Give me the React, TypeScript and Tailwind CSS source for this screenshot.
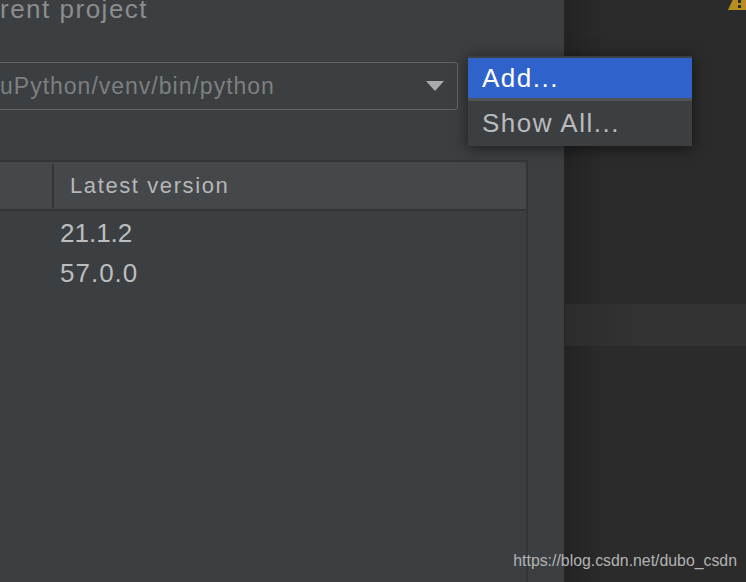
function WarningIcon() {
  return (
    <svg width="18" height="10" viewBox="0 0 18 10" className="absolute right-0 top-0">
      <path d="M6 -3 L18 -3 L18 10 L0 10 Z" fill="#b8901f" />
      <rect x="10" y="0" width="3" height="3" fill="#2b2b2b" />
      <rect x="10" y="5" width="3" height="3" fill="#2b2b2b" />
    </svg>
  )
}

export default function App() {
  return (
    <div className="relative flex h-[582px] w-[746px] overflow-hidden bg-[#2b2b2b] font-['Liberation_Sans',sans-serif] antialiased">
      <div className="flex w-[565px] shrink-0 flex-col border-r border-[#252525] bg-[#3c3f41]">
        <div className="h-[22px] whitespace-nowrap pt-[1px] text-[26px] leading-[16px] tracking-[1.5px] text-[#8b8d8e]">
          rent project
        </div>

        <div className="mt-[40px] flex h-[48px] w-[458px] items-center justify-between rounded-r-[4px] border border-l-0 border-[#646464] pr-[13px]">
          <span className="whitespace-nowrap text-[23px] leading-[26px] tracking-[1px] text-[#7d7f80]">
            uPython/venv/bin/python
          </span>
          <div className="h-0 w-0 border-x-[9px] border-t-[10px] border-x-transparent border-t-[#a9abad]" />
        </div>

        <div className="mt-[50px] flex h-[424px] w-[528px] flex-col border-r-[2px] border-t-[2px] border-[#333536]">
          <div className="flex h-[49px] items-center border-b-[2px] border-[#333536] bg-[#45484a] pt-[2px]">
            <div className="h-[44px] w-[54px] border-r-[2px] border-[#333536]" />
            <span className="ml-[16px] whitespace-nowrap text-[22px] leading-[26px] tracking-[1.6px] text-[#b5b7b8]">
              Latest version
            </span>
          </div>
          <div className="flex flex-col gap-[13px] pl-[60px] pt-[9px] text-[26px] leading-[27px] text-[#bbbdbe]">
            <span>21.1.2</span>
            <span className="tracking-[1px]">57.0.0</span>
          </div>
        </div>
      </div>

      <div className="flex flex-1 flex-col bg-[linear-gradient(to_right,#232323,#2b2b2b_40px)] pt-[304px]">
        <div className="h-[42px] bg-[linear-gradient(to_right,#2c2c2c,#333333_80px)]" />
      </div>

      <WarningIcon />

      {/* popup */}
      <div className="absolute left-[468px] top-[56px] flex w-[224px] flex-col bg-[#3c3f41] pt-[2px] shadow-[0_2px_14px_rgba(0,0,0,0.55)]">
        <div className="flex h-[40px] items-center bg-[#2f63cb] pl-[14px] text-[26px] tracking-[1.5px] text-white">
          Add...
        </div>
        <div className="h-[3px] bg-[#515456]" />
        <div className="flex h-[45px] items-center pl-[14px] text-[26px] tracking-[1.5px] text-[#b9bbbc]">
          Show All...
        </div>
      </div>

      <span className="absolute bottom-[11px] right-[9px] text-[15.85px] leading-[20px] text-[#b3b3b3]">
        https://blog.csdn.net/dubo_csdn
      </span>
    </div>
  )
}
